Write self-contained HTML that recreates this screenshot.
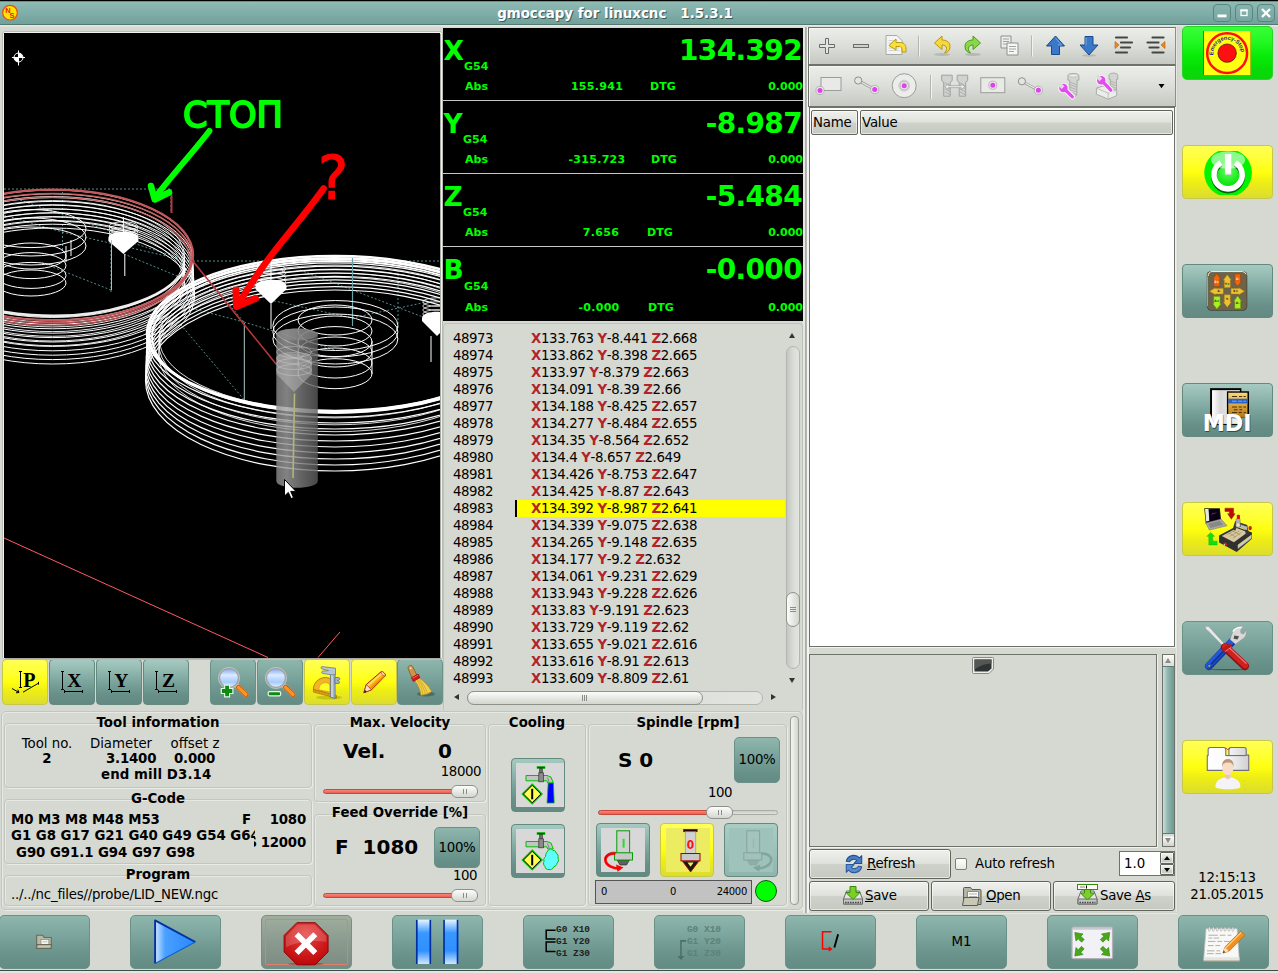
<!DOCTYPE html>
<html lang="en">
<head>
<meta charset="utf-8">
<title>gmoccapy for linuxcnc 1.5.3.1</title>
<style>
*{box-sizing:border-box;margin:0;padding:0}
html,body{width:1278px;height:973px;overflow:hidden}
body{position:relative;background:#d6d9d2;font-family:"DejaVu Sans","Liberation Sans",sans-serif;font-size:13px;color:#000;line-height:1}
.abs{position:absolute}
.b{font-weight:bold}
/* title bar */
#title{left:0;top:0;width:1278px;height:25px;background:linear-gradient(#55706a 0,#8fbcb2 1.2px,#88b5ae 5px,#80aeaa 12px,#76a49e 19px,#73a29c 22px);border-top:1px solid #000;border-bottom:1px solid #527a73}
#title .t{left:0;width:1230px;top:6px;text-align:center;color:#fff;font-weight:bold;font-size:13.4px;text-shadow:1px 1px 0 #3d5a55;white-space:pre}
.wb{width:18px;height:18px;border:1px solid #5b867f;border-radius:4px;background:linear-gradient(#86b3ad,#78a6a0)}
/* teal / yellow buttons */
.tb{border-radius:4px;background:linear-gradient(#a6cac2 0,#8db4ac 30%,#76a098 55%,#678f87 80%,#628a82 100%);border:1px solid #64897f}
.yb{border-radius:4px;background:linear-gradient(#ffff58 0,#ffff30 30%,#ffff10 50%,#eeee14 70%,#dcdc30 100%);border:1px solid #c8c848}
.gb{border-radius:5px;background:linear-gradient(#38ff38 0,#22f822 30%,#08ec08 55%,#06dc06 80%,#0cd40c 100%);border:1px solid #28d428}
/* frames */
.fr{border:1px solid #c3c6bf;border-radius:4px;box-shadow:inset 1px 1px 0 #e6e8e3, 1px 1px 0 #e9ebe6}
.lbl{font-weight:bold;font-size:13.4px;white-space:nowrap}
/* gtk buttons */
.gbtn{border:1px solid #62665a;border-radius:3px;background:linear-gradient(#f0f1ed 0,#dfe1db 48%,#cfd2ca 52%,#c6c9c1 100%);box-shadow:inset 0 0 0 1px rgba(255,255,255,.55)}

.drow{left:0;width:360px;border-bottom:1px solid #c8c8c8}
.drow:last-child{border-bottom:0}
.drow span{white-space:nowrap}
.ax{left:.5px;top:10px;font-size:26.5px}
.g54{left:21px;top:33px;font-size:11px}
.abl{left:22px;top:53px;font-size:11px}
.big{right:1px;top:9px;font-size:28px;letter-spacing:-0.65px}
.abv{left:104px;width:100px;text-align:center;top:53px;font-size:11px;letter-spacing:.3px}
.dtg{left:206px;top:53px;font-size:11px}
.dtv{right:0;top:53px;font-size:11px}
.drow:last-child .g54{top:34px}.drow:last-child .abl,.drow:last-child .abv,.drow:last-child .dtg,.drow:last-child .dtv{top:55px}

#gcl div{height:17px;line-height:17px;font-size:13.33px;white-space:pre;position:relative;letter-spacing:-0.36px}
#gcl i{font-style:normal;position:absolute;left:8px;letter-spacing:-0.48px}
#gcl u{text-decoration:none;position:absolute;left:70px;right:0;padding-left:16px}
#gcl b{color:#b0242a}
#gcl .hl u{background:#ffff00;border-left:2px solid #000;padding-left:14px}
.sbv{border:1px solid #b3b6af;border-radius:7px;background:linear-gradient(90deg,#c5c8c1,#dcdfd9 60%,#e2e4df)}
.sbth{border:1px solid #8f928b;border-radius:7px;background:linear-gradient(90deg,#fdfdfc,#e6e8e3 50%,#d3d6cf)}
.sbth.h{background:linear-gradient(#fdfdfc,#e6e8e3 50%,#d3d6cf)}

.gv{position:absolute;left:3px;right:3px;top:50%;margin-top:-3px;height:5px;border-top:1px solid #8a8d86;border-bottom:1px solid #8a8d86}
.gv:after{content:"";position:absolute;left:0;right:0;top:1px;height:1px;background:#8a8d86}
.gh{position:absolute;top:3px;bottom:3px;left:50%;margin-left:-3px;width:5px;border-left:1px solid #8a8d86;border-right:1px solid #8a8d86}
.gh:after{content:"";position:absolute;top:0;bottom:0;left:1px;width:1px;background:#8a8d86}

.c{text-align:center}.r{text-align:right}
.lbl{background:#d6d9d2;font-size:13.33px}
.lbl.c{background:none}
.sl{height:5px;border:1px solid #c9483c;border-radius:3px;background:linear-gradient(#f5897c,#ee5d4e)}
.slh{width:27px;height:13px;border:1px solid #8f928b;border-radius:6px;background:linear-gradient(#fdfdfc,#e8eae5 50%,#d3d6cf)}
.slh .gh{top:3px;bottom:3px;margin-left:-2px;width:4px}
.slh .gh:after{display:none}

.tbar{background:linear-gradient(#eceee9,#dcdfd9 50%,#c6c9c2);border:1px solid #6f726b;border-right-color:#8c8f88;box-shadow:inset 1px 1px 0 #f6f7f4,0 1px 0 #eef0ec}

.ul{text-decoration:underline}

.tb2{border-radius:5px;background:linear-gradient(#8eb6ad 0,#7da69e 35%,#6f9991 60%,#668f87 85%,#648c84 100%);border:1px solid #6a9188}

.drow:nth-child(2) .dtg{left:208px}.drow:nth-child(3) .dtg{left:204px}.drow:nth-child(4) .dtg{left:205px}.drow:nth-child(1) .dtg{left:207px}
.drow:nth-child(2) .g54,.drow:nth-child(3) .g54{left:20px}
</style>
</head>
<body>
<!-- TITLE -->
<div id="title" class="abs">
  <div class="abs t">gmoccapy for linuxcnc   1.5.3.1</div>
</div>
<div class="abs" style="left:0;top:25px;width:1278px;height:2px;background:linear-gradient(#e6e8e3,#dddfd9)"></div>
<!-- DRO -->
<div class="abs" id="dro" style="left:443px;top:28px;width:360px;height:293px;background:#000;color:#00ff00;font-weight:bold">
<div class="abs drow" style="top:0px;height:73px"><span class="abs ax">X</span><span class="abs g54">G54</span><span class="abs abl">Abs</span><span class="abs big">134.392</span><span class="abs abv">155.941</span><span class="abs dtg">DTG</span><span class="abs dtv">0.000</span></div>
<div class="abs drow" style="top:73px;height:73px"><span class="abs ax">Y</span><span class="abs g54">G54</span><span class="abs abl">Abs</span><span class="abs big">-8.987</span><span class="abs abv">-315.723</span><span class="abs dtg">DTG</span><span class="abs dtv">0.000</span></div>
<div class="abs drow" style="top:146px;height:73px"><span class="abs ax">Z</span><span class="abs g54">G54</span><span class="abs abl">Abs</span><span class="abs big">-5.484</span><span class="abs abv" style="margin-left:4px">7.656</span><span class="abs dtg">DTG</span><span class="abs dtv">0.000</span></div>
<div class="abs drow" style="top:219px;height:75px"><span class="abs ax">B</span><span class="abs g54">G54</span><span class="abs abl">Abs</span><span class="abs big">-0.000</span><span class="abs abv" style="margin-left:2px">-0.000</span><span class="abs dtg">DTG</span><span class="abs dtv">0.000</span></div>
</div>
<!-- GCODE LIST -->
<div class="abs" id="gl" style="left:443px;top:323px;width:360px;height:387px;border:1px solid #bfc2bb;border-radius:4px 4px 0 0;border-bottom:0"></div>
<div class="abs" id="gcl" style="left:445px;top:330px;width:340px;height:360px;overflow:hidden">
<div><i>48973</i><u><b>X</b>133.763 <b>Y</b>-8.441 <b>Z</b>2.668</u></div>
<div><i>48974</i><u><b>X</b>133.862 <b>Y</b>-8.398 <b>Z</b>2.665</u></div>
<div><i>48975</i><u><b>X</b>133.97 <b>Y</b>-8.379 <b>Z</b>2.663</u></div>
<div><i>48976</i><u><b>X</b>134.091 <b>Y</b>-8.39 <b>Z</b>2.66</u></div>
<div><i>48977</i><u><b>X</b>134.188 <b>Y</b>-8.425 <b>Z</b>2.657</u></div>
<div><i>48978</i><u><b>X</b>134.277 <b>Y</b>-8.484 <b>Z</b>2.655</u></div>
<div><i>48979</i><u><b>X</b>134.35 <b>Y</b>-8.564 <b>Z</b>2.652</u></div>
<div><i>48980</i><u><b>X</b>134.4 <b>Y</b>-8.657 <b>Z</b>2.649</u></div>
<div><i>48981</i><u><b>X</b>134.426 <b>Y</b>-8.753 <b>Z</b>2.647</u></div>
<div><i>48982</i><u><b>X</b>134.425 <b>Y</b>-8.87 <b>Z</b>2.643</u></div>
<div class="hl"><i>48983</i><u><b>X</b>134.392 <b>Y</b>-8.987 <b>Z</b>2.641</u></div>
<div><i>48984</i><u><b>X</b>134.339 <b>Y</b>-9.075 <b>Z</b>2.638</u></div>
<div><i>48985</i><u><b>X</b>134.265 <b>Y</b>-9.148 <b>Z</b>2.635</u></div>
<div><i>48986</i><u><b>X</b>134.177 <b>Y</b>-9.2 <b>Z</b>2.632</u></div>
<div><i>48987</i><u><b>X</b>134.061 <b>Y</b>-9.231 <b>Z</b>2.629</u></div>
<div><i>48988</i><u><b>X</b>133.943 <b>Y</b>-9.228 <b>Z</b>2.626</u></div>
<div><i>48989</i><u><b>X</b>133.83 <b>Y</b>-9.191 <b>Z</b>2.623</u></div>
<div><i>48990</i><u><b>X</b>133.729 <b>Y</b>-9.119 <b>Z</b>2.62</u></div>
<div><i>48991</i><u><b>X</b>133.655 <b>Y</b>-9.021 <b>Z</b>2.616</u></div>
<div><i>48992</i><u><b>X</b>133.616 <b>Y</b>-8.91 <b>Z</b>2.613</u></div>
<div><i>48993</i><u><b>X</b>133.609 <b>Y</b>-8.809 <b>Z</b>2.61</u></div>
</div>
<div class="abs sbv" style="left:786px;top:346px;width:14px;height:323px"></div>
<div class="abs sbth" style="left:786px;top:592px;width:14px;height:35px"><em class="gv"></em></div>
<div class="abs" style="left:789px;top:333px;border:3.5px solid transparent;border-bottom:5px solid #333;border-top:0"></div>
<div class="abs" style="left:789px;top:678px;border:3.5px solid transparent;border-top:5px solid #333;border-bottom:0"></div>
<div class="abs sbv" style="left:467px;top:691px;width:296px;height:14px"></div>
<div class="abs sbth h" style="left:467px;top:691px;width:236px;height:14px"><em class="gh"></em></div>
<div class="abs" style="left:454px;top:694px;border:3.5px solid transparent;border-right:5px solid #333;border-left:0"></div>
<div class="abs" style="left:771px;top:694px;border:3.5px solid transparent;border-left:5px solid #333;border-right:0"></div>
<!-- VIEW BUTTONS -->
<div class="abs yb" style="left:2px;top:659px;width:46px;height:46px"><svg width="44" height="44" viewBox="0 0 44 44"><text x="20.2" y="27.3" font-family="Liberation Serif,DejaVu Serif,serif" font-weight="bold" font-size="20">P</text><path d="M16 11.500h3M17.500 11.500v16M16 27.500h3M9 28.500l7 4M16 32.500l-1.200-2.800M16 32.500l-3 .3M20 32.200l15.500-9M35.500 21.800v2.800" stroke="#000" stroke-width="1" fill="none"/></svg></div>
<div class="abs tb" style="left:49px;top:659px;width:46px;height:46px"><svg width="44" height="44" viewBox="0 0 44 44"><text x="17.3" y="27" font-family="Liberation Serif,DejaVu Serif,serif" font-weight="bold" font-size="19.5">X</text><path d="M11 11.500h3M12.500 11.500v18M11 29.500h3M14.500 31.500h18M14.500 30v3M32.500 30v3" stroke="#000" stroke-width="1" fill="none"/></svg></div>
<div class="abs tb" style="left:96px;top:659px;width:46px;height:46px"><svg width="44" height="44" viewBox="0 0 44 44"><text x="17.3" y="27" font-family="Liberation Serif,DejaVu Serif,serif" font-weight="bold" font-size="19.5">Y</text><path d="M11 11.500h3M12.500 11.500v18M11 29.500h3M14.500 31.500h18M14.500 30v3M32.500 30v3" stroke="#000" stroke-width="1" fill="none"/></svg></div>
<div class="abs tb" style="left:143px;top:659px;width:46px;height:46px"><svg width="44" height="44" viewBox="0 0 44 44"><text x="18" y="27" font-family="Liberation Serif,DejaVu Serif,serif" font-weight="bold" font-size="19.5">Z</text><path d="M11 11.500h3M12.500 11.500v18M11 29.500h3M14.500 31.500h18M14.500 30v3M32.500 30v3" stroke="#000" stroke-width="1" fill="none"/></svg></div>
<div class="abs tb2" style="left:210px;top:659px;width:46px;height:46px;border-radius:4px"><svg width="44" height="44" viewBox="0 0 44 44"><defs><linearGradient id="lens" x1="0" y1="0" x2="0" y2="1"><stop offset="0" stop-color="#7aa4f0"/><stop offset=".35" stop-color="#dcebff"/><stop offset=".7" stop-color="#a4ccff"/><stop offset="1" stop-color="#e4f0ff"/></linearGradient></defs><path d="M25 25l10 9.500" stroke="#b4b4b4" stroke-width="5.200" stroke-linecap="round"/><path d="M27.500 27.300l7.500 7.200" stroke="#c85a00" stroke-width="5" stroke-linecap="round"/><path d="M27.500 27.300l7.500 7.200" stroke="#ff9420" stroke-width="3.200" stroke-linecap="round"/><circle cx="18" cy="18" r="9.700" fill="url(#lens)" stroke="#a2a2a2" stroke-width="1.800"/><circle cx="18" cy="18" r="10.600" fill="none" stroke="#d8d8d8" stroke-width=".6"/><path d="M16.100 24.600v12.800M9.700 31h12.800" stroke="#e8f4e8" stroke-width="6" stroke-linejoin="round"/><path d="M16.100 25.800v10.400M10.900 31h10.400" stroke="#0c8c0c" stroke-width="3.800"/></svg></div>
<div class="abs tb2" style="left:257px;top:659px;width:46px;height:46px;border-radius:4px"><svg width="44" height="44" viewBox="0 0 44 44"><path d="M25 25l10 9.500" stroke="#b4b4b4" stroke-width="5.200" stroke-linecap="round"/><path d="M27.500 27.300l7.500 7.200" stroke="#c85a00" stroke-width="5" stroke-linecap="round"/><path d="M27.500 27.300l7.500 7.200" stroke="#ff9420" stroke-width="3.200" stroke-linecap="round"/><circle cx="18" cy="18" r="9.700" fill="url(#lens)" stroke="#a2a2a2" stroke-width="1.800"/><circle cx="18" cy="18" r="10.600" fill="none" stroke="#d8d8d8" stroke-width=".6"/><rect x="9.600" y="31" width="13.600" height="5.400" rx="1.800" fill="#e8f4e8"/><rect x="10.800" y="32.200" width="11.200" height="3" rx=".8" fill="#0c8c0c"/></svg></div>
<div class="abs yb" style="left:304px;top:659px;width:46px;height:46px"><svg width="44" height="44" viewBox="0 0 44 44"><ellipse cx="24" cy="37.500" rx="13" ry="2" fill="#a0a000" opacity=".45"/><path d="M8.400 29.500C8.400 22.500 14 17.500 20.500 17.500c3.500 0 5.700 1.500 6.700 3.500v14z" fill="#f4b428" stroke="#b07808" stroke-width=".9"/><path d="M13.800 29.800c0-4.200 3-7.200 6.700-7.200 2 0 3.500 1 4.500 2.400v7z" fill="#ffff28" stroke="#c08810" stroke-width=".6"/><path d="M8.400 29.500l23.100 6v2.600l-23.100-6z" fill="#e8a418" stroke="#a87008" stroke-width=".7"/><path d="M11 30.800v1.500M14 31.600v1.500M17 32.400v1.500M20 33.200v1.500M23 34v1.500" stroke="#a87008" stroke-width=".6"/><path d="M25.400 11.500h4.700v27l-4.700-1.200z" fill="#a4b2c2" stroke="#5e6e80" stroke-width=".8"/><path d="M27 12v25" stroke="#e4eaf2" stroke-width="1"/><path d="M30.500 8.200L17 6.600c-1.200 0-1.200 2 0 2.400l6.500 1.600-6 .6c-1.200.2-1.200 2 0 2.200l8 1.300h5z" fill="#b8c4d0" stroke="#6a7a8c" stroke-width=".8" stroke-linejoin="round"/><path d="M30 17.500h3.500c1.500 0 1.800 2 .5 2.500l-1.500.5 1.500.8c1 .5.800 2.200-.5 2.200H30z" fill="#a4b2c2" stroke="#5e6e80" stroke-width=".8"/></svg></div>
<div class="abs yb" style="left:351px;top:659px;width:46px;height:46px"><svg width="44" height="44" viewBox="0 0 44 44"><path d="M11.900 32.700l2.400-8.200L29 11.800c1.400-1.200 5.600 2.800 4.200 4.200L19.500 29.800z" fill="#ffb010" stroke="#b01818" stroke-width="1" stroke-linejoin="round"/><path d="M15.500 25.800L30.200 13" stroke="#ffe060" stroke-width="1.800"/><path d="M18.300 28.600L32.500 16" stroke="#e88800" stroke-width="1.400"/><path d="M11.900 32.700l2.400-8.200 5.200 5.300z" fill="#f8e4c4" stroke="#b01818" stroke-width=".7" stroke-linejoin="round"/><path d="M11.900 32.700l.9-3 2 2.100z" fill="#202020"/><ellipse cx="31.200" cy="13.800" rx="1.300" ry="2.800" transform="rotate(-45 31.200 13.800)" fill="#f0d8b0" stroke="#b01818" stroke-width=".5"/></svg></div>
<div class="abs tb2" style="left:397px;top:659px;width:46px;height:46px;border-radius:4px"><svg width="44" height="44" viewBox="0 0 44 44"><ellipse cx="28" cy="34" rx="9" ry="2.600" fill="#2c4a44" opacity=".5"/><path d="M10.200 8.500c-.8-2.800 3-4.300 4.500-2l4.500 9.500-5 2.500z" fill="#cf9448" stroke="#8a5a20" stroke-width=".8"/><circle cx="12.600" cy="8.200" r="1" fill="#f4e4c8"/><path d="M16.500 20.500l4.500-2.500c5 3 9.500 7.500 12.600 13.500-2 1.500-5 3-10.600 3.800-.8-5.800-3-10.800-6.500-14.800z" fill="#f2d24c" stroke="#b8901c" stroke-width=".8"/><path d="M19 20.500c3 3.500 5 8.500 6 14M21 19.500c4 3.500 6.500 8 8.500 13.500M20 20c3.500 3.500 5.800 8 7.400 14" stroke="#c49c24" stroke-width=".7" fill="none"/><path d="M13.500 17.800l6.500-3.800 1.800 3.700-6.500 3.800z" fill="#d81818" stroke="#8a0808" stroke-width=".7"/><path d="M14.500 18.300l5.500-3.200" stroke="#ff7060" stroke-width=".8"/></svg></div>
<!-- INFO PANELS -->
<div class="abs fr" style="left:1px;top:711px;width:802px;height:199px;border-radius:5px"></div>
<div class="abs fr" style="left:4px;top:723px;width:308px;height:65px"></div>
<div class="abs lbl c" style="left:58px;width:200px;top:716px">Tool information</div>
<div class="abs c" style="left:0;width:94px;top:737px;font-size:13.33px">Tool no.</div>
<div class="abs c b" style="left:0;width:94px;top:752px;font-size:13.33px">2</div>
<div class="abs c" style="left:71px;width:100px;top:737px;font-size:13.33px">Diameter</div>
<div class="abs b" style="left:106px;top:752px;font-size:13.33px;letter-spacing:-.2px">3.1400</div>
<div class="abs c" style="left:145px;width:100px;top:737px;font-size:13.33px">offset z</div>
<div class="abs b" style="left:174px;top:752px;font-size:13.33px;letter-spacing:-.2px">0.000</div>
<div class="abs b" style="left:101px;top:768px;font-size:13.33px;letter-spacing:.1px">end mill D3.14</div>

<div class="abs fr" style="left:4px;top:799px;width:308px;height:65px"></div>
<div class="abs lbl c" style="left:58px;width:200px;top:792px">G-Code</div>
<div class="abs b" style="left:11px;top:813px;font-size:13.33px;letter-spacing:-.06px">M0 M3 M8 M48 M53</div>
<div class="abs b" style="left:11px;top:829px;width:244px;overflow:hidden;white-space:nowrap;font-size:13.33px;letter-spacing:-.04px">G1 G8 G17 G21 G40 G49 G54 G64</div>
<div class="abs b" style="left:16px;top:846px;font-size:13.33px;letter-spacing:-.06px">G90 G91.1 G94 G97 G98</div>
<div class="abs b" style="left:242px;top:813px;font-size:13.33px">F</div>
<div class="abs b r" style="left:256px;width:50px;top:813px;font-size:13.33px;letter-spacing:-.2px">1080</div>
<div class="abs b" style="left:254px;width:3px;overflow:hidden;top:836px;font-size:13.33px;direction:rtl">S</div>
<div class="abs b r" style="left:256px;width:50px;top:836px;font-size:13.33px;letter-spacing:-.2px">12000</div>

<div class="abs fr" style="left:4px;top:875px;width:308px;height:31px"></div>
<div class="abs lbl c" style="left:58px;width:200px;top:868px">Program</div>
<div class="abs" style="left:11px;top:888px;font-size:13.33px;letter-spacing:-.22px">../../nc_files//probe/LID_NEW.ngc</div>

<div class="abs fr" style="left:314px;top:724px;width:172px;height:78px"></div>
<div class="abs lbl c" style="left:300px;width:200px;top:716px">Max. Velocity</div>
<div class="abs b" style="left:343px;top:741px;font-size:20px">Vel.</div>
<div class="abs b" style="left:438px;top:741px;font-size:20px">0</div>
<div class="abs r" style="left:400px;width:81px;top:765px;font-size:13.33px;letter-spacing:-.45px">18000</div>
<div class="abs sl" style="left:323px;top:789px;width:155px"></div><div class="abs slh" style="left:451px;top:785px"><em class="gh"></em></div>

<div class="abs fr" style="left:314px;top:814px;width:172px;height:92px"></div>
<div class="abs lbl c" style="left:300px;width:200px;top:806px">Feed Override [%]</div>
<div class="abs b" style="left:335px;top:837px;font-size:20px;white-space:pre">F  1080</div>
<div class="abs tb2 c" style="left:434px;top:827px;width:46px;height:41px;line-height:39px;font-size:13.33px;letter-spacing:-.3px">100%</div>
<div class="abs r" style="left:400px;width:77px;top:869px;font-size:13.33px;letter-spacing:-.45px">100</div>
<div class="abs sl" style="left:323px;top:893px;width:155px"></div><div class="abs slh" style="left:451px;top:889px"><em class="gh"></em></div>

<div class="abs fr" style="left:488px;top:724px;width:98px;height:182px"></div>
<div class="abs lbl c" style="left:437px;width:200px;top:716px">Cooling</div>

<div class="abs fr" style="left:588px;top:724px;width:199px;height:182px"></div>
<div class="abs lbl c" style="left:588px;width:200px;top:716px">Spindle [rpm]</div>
<div class="abs b" style="left:618px;top:750px;font-size:20px">S 0</div>
<div class="abs tb2 c" style="left:734px;top:737px;width:46px;height:46px;line-height:44px;font-size:13.33px;letter-spacing:-.3px">100%</div>
<div class="abs c" style="left:680px;width:80px;top:786px;font-size:13.33px;letter-spacing:-.45px">100</div>
<div class="abs sl" style="left:598px;top:810px;width:180px;background:linear-gradient(#c9ccc5,#dfe1dc);border-color:#a9aca5"></div>
<div class="abs sl" style="left:598px;top:810px;width:112px"></div><div class="abs slh" style="left:706px;top:806px"><em class="gh"></em></div>
<div class="abs" style="left:595px;top:880px;width:157px;height:24px;background:#c2c2c2;border:1px solid #555;font-size:10px;letter-spacing:-.3px"><span class="abs" style="left:5px;top:6px">0</span><span class="abs c" style="left:57px;width:40px;top:6px">0</span><span class="abs r" style="right:4px;top:6px">24000</span></div>
<div class="abs" style="left:755px;top:880px;width:22px;height:22px;border-radius:50%;background:#00ff00;border:1px solid #0a5a0a"></div>
<div class="abs" style="left:790px;top:716px;width:9px;height:189px;border:1px solid #9a9d96;border-radius:4px;background:linear-gradient(90deg,#f4f5f2,#d2d5ce)"></div>
<!-- COOLING/SPINDLE BUTTONS -->
<div class="abs tb" style="left:511px;top:758px;width:54px;height:54px"><svg class="abs" style="left:4px;top:4px;background:#d8d8d8" width="48" height="44" viewBox="0 0 48 44"><path d="M21 3.500h8v2h-8z" fill="#0a5a0a" stroke="#00c000" stroke-width=".6"/><path d="M23.600 5.500h2.800v5h-2.800z" fill="#707070" stroke="#222" stroke-width=".6"/><path d="M10 12.500h21l4 1.500 2.300 6h-5.500l-1-2.200H10z" fill="#c4c4c4" stroke="#00c000" stroke-width="1"/><path d="M31.500 14.500l1.800 5" stroke="#888" stroke-width="1"/><rect x="22.800" y="9.800" width="4.600" height="9" fill="#8a8a8a" stroke="#333" stroke-width=".7"/><path d="M16.200 21.300l9.700 9.700-9.700 9.700L6.500 31z" fill="#ffff50" stroke="#00c000" stroke-width="1.600"/><path d="M16.200 22.300l8.700 8.700-8.700 8.700L7.500 31z" fill="#ffff50" stroke="#000" stroke-width="1"/><rect x="15.200" y="25.800" width="2" height="10.500" fill="#000"/><path d="M32.200 20h5.200l.8 20h-7.200z" fill="#0000ff" stroke="#00c000" stroke-width=".8"/></svg></div>
<div class="abs tb" style="left:511px;top:824px;width:54px;height:54px"><svg class="abs" style="left:4px;top:4px;background:#d8d8d8" width="48" height="44" viewBox="0 0 48 44"><path d="M21 3.500h8v2h-8z" fill="#0a5a0a" stroke="#00c000" stroke-width=".6"/><path d="M23.600 5.500h2.800v5h-2.800z" fill="#707070" stroke="#222" stroke-width=".6"/><path d="M10 12.500h21l4 1.500 2.300 6h-5.500l-1-2.200H10z" fill="#c4c4c4" stroke="#00c000" stroke-width="1"/><path d="M31.500 14.500l1.800 5" stroke="#888" stroke-width="1"/><rect x="22.800" y="9.800" width="4.600" height="9" fill="#8a8a8a" stroke="#333" stroke-width=".7"/><path d="M16.200 21.300l9.700 9.700-9.700 9.700L6.500 31z" fill="#ffff50" stroke="#00c000" stroke-width="1.600"/><path d="M16.200 22.300l8.700 8.700-8.700 8.700L7.500 31z" fill="#ffff50" stroke="#000" stroke-width="1"/><rect x="15.200" y="25.800" width="2" height="10.500" fill="#000"/><path d="M33 20.500c2-1 3 0 4 1 2-.5 3 1 3 2.500 2 1 2.500 3 2 5 1 2 .5 4-1 5 0 2-1.500 3.500-3 3.500-1 2.500-3 3.500-5 3-2 .5-4-1-4-3-1.500-1.500-2-3.500-1-5-.5-2 0-4 1.500-5 0-2.500 1.500-5 3.500-7z" fill="#60ffff" stroke="#00c000" stroke-width="1"/></svg></div>
<div class="abs tb" style="left:596px;top:823px;width:54px;height:54px"><svg class="abs" style="left:4px;top:4px;background:#d8d8d8" width="44" height="44" viewBox="0 0 44 44"><path d="M16 32h12.500l-3 5h-6.500z" fill="#606060" stroke="#222" stroke-width=".6"/><rect x="15.800" y="2.800" width="12.800" height="22.500" fill="#d0d0d0" stroke="#00a000" stroke-width="1"/><rect x="21.600" y="10.800" width="2" height="8.800" fill="#20e020"/><rect x="13.500" y="24.800" width="18" height="7.200" fill="#c8c8c8" stroke="#00a000" stroke-width="1"/><path d="M14.500 25.500C8 25 3.500 28.500 4.500 33c1 4.500 7 7.500 14 7.500" fill="none" stroke="#ff0000" stroke-width="2.600"/><path d="M15 36.500l7.500 3-6 4.300z" fill="#ff0000"/><path d="M14.500 25.500C8 25 3.500 28.500 4.500 33" fill="none" stroke="#a00000" stroke-width=".6" transform="translate(0,-1.300)"/></svg></div>
<div class="abs yb" style="left:660px;top:823px;width:54px;height:54px"><svg class="abs" style="left:5px;top:4px;background:#ecec62" width="44" height="44" viewBox="0 0 44 44"><rect x="17.600" y="1.300" width="13.600" height="2.500" fill="#300000" stroke="#900" stroke-width=".5"/><rect x="19.200" y="3.800" width="10.600" height="21.800" fill="#d2d2d2" stroke="#888" stroke-width=".6"/><text x="24.500" y="21.500" text-anchor="middle" font-family="DejaVu Sans,Liberation Sans,sans-serif" font-size="12.500" font-weight="bold" fill="#ff1010" transform="translate(24.500 0) scale(.85 1) translate(-24.500 0)">0</text><rect x="15" y="25.500" width="19" height="7.400" fill="#c8c8c8" stroke="#a00000" stroke-width="1"/><path d="M16.500 33.300h16.200L24.600 44z" fill="#181818" stroke="#c00000" stroke-width=".9"/><path d="M21.500 34.500h6.200l-3.100 4.200z" fill="#ecec62"/></svg></div>
<div class="abs tb" style="left:724px;top:823px;width:54px;height:54px;background:linear-gradient(#a9cdc5,#8fb6ae)"><svg class="abs" style="left:4px;top:4px;background:#9fc3bb" width="44" height="44" viewBox="0 0 44 44"><g opacity=".55"><path d="M18 32h12.500l-3 5h-6.500z" fill="#80a098" stroke="#6f958d" stroke-width=".6"/><rect x="17.800" y="2.800" width="12.800" height="22.500" fill="#a8c4be" stroke="#6a9088" stroke-width="1"/><rect x="23.600" y="10.800" width="1.600" height="8.800" fill="#8ab8a8"/><rect x="14.800" y="24.800" width="18" height="7.200" fill="#a4c0ba" stroke="#6a9088" stroke-width="1"/><path d="M32 25.500c6.500-.5 11 3 10 7.500-1 4.500-7 7.500-14 7.500" fill="none" stroke="#6a9088" stroke-width="2.600"/><path d="M31.500 36.500l-7.500 3 6 4.300z" fill="#6a9088"/></g></svg></div>
<!-- RIGHT PANEL -->
<div class="abs" style="left:803px;top:27px;width:6px;height:886px;background:linear-gradient(90deg,#e6e8e3 0,#e6e8e3 30%,#a9aca5 42%,#b3b6af 58%,#f4f5f2 70%,#f4f5f2 100%)"></div>
<div class="abs tbar" style="left:808px;top:27px;width:368px;height:38px"><svg class="abs" style="left:0;top:0" width="366" height="36" viewBox="0 0 366 36"><g transform="translate(18.0 18.0)"><path d="M-1.500-7.500h3v6h6v3h-6v6h-3v-6h-6v-3h6z" fill="#e4e5e2" stroke="#6a6c68" stroke-width="1"/></g><g transform="translate(52.0 18.0)"><rect x="-7.500" y="-1.500" width="15" height="3" fill="#d0d1ce" stroke="#6a6c68" stroke-width="1"/></g><g transform="translate(86.5 17.5)"><path d="M-9.500-10h11l5 5v14h-16z" fill="#f4f4f2" stroke="#a8aaa6" stroke-width="1"/><path d="M-7-5h9M-7-2.500h11M-7 0h11M-7 2.500h11M-7 5h11" stroke="#c8cac6" stroke-width=".8"/><path d="M-6.500 0l7-6.500v3.500h4.500c4 0 5.500 3 5.500 6.500v3h-4v-2c0-2-.5-3.500-2.500-3.500h-3.500v3.500z" fill="#f8e03c" stroke="#b89a10" stroke-width="1" stroke-linejoin="round"/></g><g transform="translate(133.0 17.0)"><ellipse cx="0" cy="9.500" rx="8" ry="1.500" fill="#9a9c96" opacity=".5"/><path d="M-7.500-2l7.500-7v4c5 0 8 2.500 8 6.500s-2.500 6-5.500 6.500c1.500-1.500 2-2.500 2-4.500 0-2.500-2-3.500-4.500-3.500v4.500z" fill="#f6d83a" stroke="#b8960c" stroke-width="1" stroke-linejoin="round"/></g><g transform="translate(164.0 17.0)"><ellipse cx="0" cy="9.500" rx="8" ry="1.500" fill="#9a9c96" opacity=".5"/><path d="M7.500-2l-7.500-7v4c-5 0-8 2.500-8 6.500s2.500 6 5.500 6.500c-1.500-1.500-2-2.500-2-4.500 0-2.500 2-3.500 4.500-3.500v4.500z" fill="#8ad84a" stroke="#4a9a18" stroke-width="1" stroke-linejoin="round"/></g><g transform="translate(200.5 17.5)"><path d="M-8.500-9.500h10v12h-10z" fill="#ededeb" stroke="#8e908c" stroke-width="1"/><path d="M-6.500-6.500h6M-6.500-4h6M-6.500-1.500h6" stroke="#9a9c98" stroke-width=".9"/><path d="M-2.500-2.500h11v12h-11z" fill="#f6f6f4" stroke="#8e908c" stroke-width="1"/><path d="M-.5 1h7M-.5 3.500h7M-.5 6h5" stroke="#9a9c98" stroke-width=".9"/></g><g transform="translate(246.5 17.5)"><path d="M0-9.500l9 10h-5v8.500h-8v-8.500h-5z" fill="#3a78c8" stroke="#1c4a8c" stroke-width="1" stroke-linejoin="round"/><path d="M0-7.500l6 7h-3.500" fill="none" stroke="#7aa8e0" stroke-width="1"/></g><g transform="translate(280.0 17.5)"><ellipse cx="0" cy="10" rx="7" ry="1.200" fill="#9a9c96" opacity=".5"/><path d="M0 9.500l9-10h-5v-8.500h-8v8.500h-5z" fill="#3a78c8" stroke="#1c4a8c" stroke-width="1" stroke-linejoin="round"/><path d="M-3-8v8" stroke="#7aa8e0" stroke-width="1"/></g><g transform="translate(314.0 17.0)"><g stroke="#444642" stroke-width="2.200" stroke-linecap="round"><path d="M-7-7.500h11M-2-2.500h11M-2 2.500h9M-7 7.500h11"/></g><path d="M-8-3.500l4 3.500-4 3.500z" fill="#f08818" stroke="#b85c08" stroke-width=".6"/></g><g transform="translate(347.5 17.0)"><g stroke="#444642" stroke-width="2.200" stroke-linecap="round"><path d="M-4-7.500h11M-9-2.500h11M-7 2.500h9M-4 7.500h11"/></g><path d="M8.500-3.500l-4 3.500 4 3.500z" fill="#f08818" stroke="#b85c08" stroke-width=".6"/></g><path d="M109.500 7.500v21" stroke="#b4b7b0"/><path d="M110.500 7.500v21" stroke="#f2f3f0"/><path d="M222.500 7.500v21" stroke="#b4b7b0"/><path d="M223.500 7.500v21" stroke="#f2f3f0"/></svg></div>
<div class="abs tbar" style="left:808px;top:65px;width:368px;height:42px"><svg class="abs" style="left:0;top:0" width="366" height="40" viewBox="0 0 366 40"><g transform="translate(20.0 19.0)"><rect x="-8" y="-7.500" width="20" height="13" fill="#e9eae7" stroke="#9a9c98" stroke-width="1"/><circle cx="-9" cy="5.5" r="3.300" fill="#e040f0" stroke="#e8e8e8" stroke-width="1.600"/><circle cx="-9" cy="5.5" r="4.100" fill="none" stroke="#9a9c98" stroke-width=".6"/></g><g transform="translate(57.7 19.0)"><path d="M-8.500-4.500l16.500 9" stroke="#9a9c98" stroke-width="2.600"/><path d="M-8.500-4.500l16.500 9" stroke="#eeeeec" stroke-width="1.200"/><circle cx="-8.500" cy="-4.500" r="3.600" fill="#e4e5e2" stroke="#8e908c" stroke-width="1"/><circle cx="8" cy="4.5" r="3.300" fill="#e040f0" stroke="#e8e8e8" stroke-width="1.600"/><circle cx="8" cy="4.5" r="4.100" fill="none" stroke="#9a9c98" stroke-width=".6"/></g><g transform="translate(95.2 19.7)"><circle cx="0" cy="0" r="12" fill="#ecedea" stroke="#9a9c98" stroke-width="1"/><circle cx="0" cy="0" r="5.500" fill="#e2e3e0" stroke="#c4c6c2" stroke-width=".8"/><circle cx="0" cy="0" r="3.300" fill="#e040f0" stroke="#e8e8e8" stroke-width="1.600"/><circle cx="0" cy="0" r="4.100" fill="none" stroke="#9a9c98" stroke-width=".6"/></g><g transform="translate(145.7 19.7)"><path d="M-13-10.500h10.500v5.500l-2 1.500v14h-6.500v-14l-2-1.500zM2.500-10.500h10.500v5.500l-2 1.500v14h-6.500v-14l-2-1.500z" fill="#d2d3d0" stroke="#a0a29e" stroke-width="1"/><path d="M-10-3l5.500 3M-10 0l5.500 3M-10 3l5.500 3M-10 6l5.500 3M5-3l5.500 3M5 0l5.500 3M5 3l5.500 3M5 6l5.500 3" stroke="#a4a6a2" stroke-width=".8"/><path d="M-10 1l3.500-3v2h13v-2l3.500 3-3.500 3v-2h-13v2z" fill="#ededeb" stroke="#a0a29e" stroke-width=".8"/></g><g transform="translate(183.8 19.2)"><rect x="-12" y="-7.500" width="24" height="15" fill="#e9eae7" stroke="#9a9c98" stroke-width="1"/><circle cx="0" cy="0" r="3.300" fill="#e040f0" stroke="#e8e8e8" stroke-width="1.600"/><circle cx="0" cy="0" r="4.100" fill="none" stroke="#9a9c98" stroke-width=".6"/></g><g transform="translate(221.4 19.8)"><path d="M-8.500-4.500l16.500 9" stroke="#9a9c98" stroke-width="2.600"/><path d="M-8.500-4.500l16.500 9" stroke="#eeeeec" stroke-width="1.200"/><circle cx="-8.500" cy="-4.500" r="3.600" fill="#e4e5e2" stroke="#8e908c" stroke-width="1"/><circle cx="8" cy="4.5" r="3.300" fill="#e040f0" stroke="#e8e8e8" stroke-width="1.600"/><circle cx="8" cy="4.5" r="4.100" fill="none" stroke="#9a9c98" stroke-width=".6"/></g><g transform="translate(259.2 19.2)"><path d="M-.3-9.500c0-3 11-3 11 0v4.500h-1.700l-.5 15-3.300 2.500-3.300-2.500-.5-15h-1.700z" fill="#d4d5d2" stroke="#a4a6a2" stroke-width=".9"/><ellipse cx="5.200" cy="-9.700" rx="4.600" ry="1.500" fill="#eeeeec" stroke="#b0b2ae" stroke-width=".6"/><path d="M2-3l6.500 2.500M2-.5l6.500 2.500M2 2l6.500 2.500M2 4.500l6.500 2.500M2 7l6.500 2.500" stroke="#a8aaa6" stroke-width=".8"/><path d="M-4.8 2.8L4.2 11.6" stroke="#f4f0f4" stroke-width="5.400" stroke-linecap="round"/><circle cx="-4.8" cy="2.8" r="5.300" fill="#f4f0f4"/><path d="M-4.8 2.8L4.2 11.6" stroke="#e24cf0" stroke-width="3.200" stroke-linecap="round"/><circle cx="-4.8" cy="2.8" r="4.200" fill="#e24cf0"/><g transform="translate(-4.8 2.8) rotate(-135.6)"><rect x="0.500" y="-1.900" width="6" height="3.800" fill="#dcdfd9"/></g></g><g transform="translate(298.2 19.2)"><path d="M1.800-10c0-2.800 8.800-2.800 8.800 0v4h-1.300v10.500h-6.200v-10.500h-1.300z" fill="#d4d5d2" stroke="#a4a6a2" stroke-width=".9"/><path d="M3.500-4l5 2M3.500-1.500l5 2M3.500 1l5 2" stroke="#a8aaa6" stroke-width=".8"/><path d="M-10.800 3l6-2 14.300 4v5.500l-8.500 3.500-11.800-5z" fill="#ececea" stroke="#a4a6a2" stroke-width=".9"/><path d="M-10.800 3l11.800 5 8.500-3M1 8v6" fill="none" stroke="#b4b6b2" stroke-width=".8"/><path d="M-6 -5L3.6 5" stroke="#f4f0f4" stroke-width="5.400" stroke-linecap="round"/><circle cx="-6" cy="-5" r="5.300" fill="#f4f0f4"/><path d="M-6 -5L3.6 5" stroke="#e24cf0" stroke-width="3.200" stroke-linecap="round"/><circle cx="-6" cy="-5" r="4.200" fill="#e24cf0"/><g transform="translate(-6 -5) rotate(-133.8)"><rect x="0.500" y="-1.900" width="6" height="3.800" fill="#dcdfd9"/></g></g><path d="M121.500 9v24" stroke="#b4b7b0"/><path d="M122.500 9v24" stroke="#f2f3f0"/><path d="M349.500 18h6l-3 4.200z" fill="#000"/></svg></div>
<div class="abs" style="left:809px;top:107px;width:366px;height:540px;background:#fff;border:1px solid #6f726b;box-shadow:1px 1px 0 #f2f3f0"></div>
<div class="abs gbtn" style="left:811px;top:110px;width:47px;height:25px;font-size:13.33px;line-height:23px;padding-left:1px;letter-spacing:-.2px;border-radius:2px">Name</div>
<div class="abs gbtn" style="left:860px;top:110px;width:313px;height:25px;font-size:13.33px;line-height:23px;padding-left:1px;letter-spacing:-.2px;border-radius:2px">Value</div>
<div class="abs" style="left:1176px;top:27px;width:2px;height:886px;background:linear-gradient(90deg,#f1f2ef,#c4c7c0)"></div>
<div class="abs" style="left:809px;top:912px;width:369px;height:2px;background:linear-gradient(#c4c7c0,#f1f2ef)"></div>
<!-- LOWER RIGHT PANEL -->
<div class="abs" style="left:809px;top:654px;width:348px;height:193px;border:1px solid #6f726b;background:#d6d9d2;box-shadow:1px 1px 0 #f2f3f0"></div>
<svg class="abs" style="left:972px;top:657px" width="22" height="17" viewBox="0 0 22 17"><path d="M.500 1.500a1 1 0 0 1 1-1h19a1 1 0 0 1 1 1v10.500l-4.500 4.500h-15.500a1 1 0 0 1-1-1z" fill="#eeeeec" stroke="#888a85"/><path d="M2.500 2.500h17v9l-3.500 3h-13.500z" fill="#2e3436"/><path d="M2.500 2.500h17v4c-6 0-12 2-17 6z" fill="#555753"/></svg>
<div class="abs" style="left:1162px;top:654px;width:13px;height:193px;border:1px solid #6f726b;background:linear-gradient(#fbfbfa,#d9dbd6 12px,#d9dbd6 181px,#fbfbfa 182px,#d0d3cc)"></div>
<div class="abs" style="left:1163px;top:666px;width:11px;height:168px;background:linear-gradient(90deg,#c4e0da,#8db5ad 45%,#6f9990);border-top:1px solid #5a7e77;border-bottom:1px solid #5a7e77"></div>
<div class="abs" style="left:1165px;top:658px;border:3.500px solid transparent;border-bottom:5px solid #8a8d86;border-top:0"></div>
<div class="abs" style="left:1165px;top:838px;border:3.500px solid transparent;border-top:5px solid #8a8d86;border-bottom:0"></div>
<div class="abs gbtn" style="left:809px;top:849px;width:142px;height:30px"></div>
<svg class="abs" style="left:843px;top:853px" width="22" height="22" viewBox="0 0 20 20"><path d="M3 7.500a7 7 0 0 1 12-3l2-2v7h-7l2.500-2.500a4 4 0 0 0-6.500 1z" fill="#4a7cc4" stroke="#244f8c" stroke-width="1" stroke-linejoin="round"/><path d="M17 12.500a7 7 0 0 1-12 3l-2 2v-7h7l-2.500 2.500a4 4 0 0 0 6.500-1z" fill="#5a8cd0" stroke="#2a5a9c" stroke-width="1" stroke-linejoin="round"/></svg>
<div class="abs" style="left:867px;top:857px;font-size:13.33px;letter-spacing:-.3px"><span class="ul">R</span>efresh</div>
<div class="abs" style="left:955px;top:858px;width:12px;height:12px;border:1px solid #7c7f78;border-radius:2px;background:linear-gradient(#fff,#e8eae5)"></div>
<div class="abs" style="left:975px;top:857px;font-size:13.33px;letter-spacing:-.2px">Auto refresh</div>
<div class="abs" style="left:1119px;top:851px;width:56px;height:25px;border:1px solid #6f726b;background:#fff;font-size:13.33px;line-height:23px;padding-left:4px">1.0</div>
<div class="abs gbtn" style="left:1160px;top:852px;width:14px;height:12px;border-radius:1px"></div>
<div class="abs gbtn" style="left:1160px;top:864px;width:14px;height:11px;border-radius:1px"></div>
<div class="abs" style="left:1164px;top:856px;border:3px solid transparent;border-bottom:4px solid #000;border-top:0"></div>
<div class="abs" style="left:1164px;top:868px;border:3px solid transparent;border-top:4px solid #000;border-bottom:0"></div>
<div class="abs gbtn" style="left:809px;top:881px;width:120px;height:30px"></div>
<div class="abs gbtn" style="left:931px;top:881px;width:120px;height:30px"></div>
<div class="abs gbtn" style="left:1053px;top:881px;width:122px;height:30px"></div>
<svg class="abs" style="left:842px;top:885px" width="22" height="22" viewBox="0 0 22 22"><path d="M1.500 14l3-8h13l3 8v5h-19z" fill="#e4e5e2" stroke="#6a6c68"/><path d="M1.500 14h19v5h-19z" fill="#c4c6c2" stroke="#6a6c68"/><path d="M3 17.500h16" stroke="#444" stroke-width="1.500" stroke-dasharray="1.500 1"/><path d="M8 1.500h6v6h4l-7 7-7-7h4z" fill="#7ad028" stroke="#3a8a08" stroke-linejoin="round"/></svg>
<div class="abs" style="left:865px;top:889px;font-size:13.33px;letter-spacing:-.3px"><span class="ul">S</span>ave</div>
<svg class="abs" style="left:962px;top:885px" width="22" height="22" viewBox="0 0 22 22"><path d="M1.500 19.500v-16a1 1 0 0 1 1-1h6l1.500 2h8a1 1 0 0 1 1 1v14z" fill="#b4b4a4" stroke="#5a5c50"/><path d="M5.500 6.500h11v9h-11z" fill="#fafaf8" stroke="#8a8c88"/><path d="M7 9h8M7 11.500h8" stroke="#a8aaa6" stroke-width=".9"/><path d="M.500 20.500l1.500-8h15l-1.500 8z" fill="#c8c8b4" stroke="#5a5c50" stroke-linejoin="round"/></svg>
<div class="abs" style="left:986px;top:889px;font-size:13.33px;letter-spacing:-.3px"><span class="ul">O</span>pen</div>
<svg class="abs" style="left:1076px;top:884px" width="23" height="23" viewBox="0 0 23 23"><path d="M2 15l3-8h13l3 8v5h-19z" fill="#e4e5e2" stroke="#6a6c68"/><path d="M2 15h19v5h-19z" fill="#c4c6c2" stroke="#6a6c68"/><path d="M3.500 18.500h16" stroke="#444" stroke-width="1.500" stroke-dasharray="1.500 1"/><path d="M8.500 5.500h6v3.500h4l-7 7-7-7h4z" fill="#7ad028" stroke="#3a8a08" stroke-linejoin="round"/><rect x="1.500" y=".500" width="20" height="5" fill="#fafaf8" stroke="#3a8a08"/><path d="M4 3h5" stroke="#888" stroke-width="1"/><path d="M10.500 1.500v3" stroke="#000" stroke-width="1"/></svg>
<div class="abs" style="left:1100px;top:889px;font-size:13.33px;letter-spacing:-.3px">Save <span class="ul">A</span>s</div>
<!-- RIGHT BUTTON COLUMN -->
<div class="abs gb" style="left:1182px;top:26px;width:91px;height:54px"></div><svg class="abs" style="left:1178px;top:22px" width="100" height="60" viewBox="0 0 1278 767"><rect x="322" y="115" width="608" height="563" fill="#ffff10"/><path d="M326 115v563" stroke="#403000" stroke-width="9"/><path d="M926 115v563" stroke="#907000" stroke-width="6"/>
<circle cx="628" cy="398" r="255" fill="none" stroke="#ff1010" stroke-width="32"/><circle cx="628" cy="398" r="118" fill="#ff1010" stroke="#300" stroke-width="8"/>
<path id="esp" d="M452 425A178 178 0 1 1 804 438" fill="none"/><text font-family="Liberation Sans,DejaVu Sans,sans-serif" font-weight="bold" font-size="72" fill="#1a1a96" letter-spacing="-1"><textPath href="#esp">Emergency-Stop</textPath></text></svg>
<div class="abs yb" style="left:1182px;top:145px;width:91px;height:54px"></div><svg class="abs" style="left:1178px;top:140px" width="100" height="60" viewBox="0 0 1278 767"><defs><clipPath id="pc"><rect x="300" y="140" width="680" height="562"/></clipPath><radialGradient id="pg" cx=".5" cy=".35" r=".7"><stop offset="0" stop-color="#60ff60"/><stop offset="1" stop-color="#00e000"/></radialGradient></defs><g clip-path="url(#pc)"><circle cx="640" cy="420" r="305" fill="#00f400"/><circle cx="640" cy="440" r="150" fill="url(#pg)"/>
<path d="M548 290A180 180 0 1 0 732 290" fill="none" stroke="#006400" stroke-width="72" transform="translate(0 22)"/>
<path d="M548 290A180 180 0 1 0 732 290" fill="none" stroke="#fff" stroke-width="72"/>
<rect x="600" y="180" width="80" height="262" fill="#fff"/><rect x="600" y="430" width="80" height="14" fill="#c8d8c8"/>
<ellipse cx="640" cy="255" rx="218" ry="112" fill="#fff" opacity=".55"/><rect x="600" y="180" width="80" height="190" fill="#fff" opacity=".7"/></g></svg>
<div class="abs tb" style="left:1182px;top:264px;width:91px;height:54px"></div><svg class="abs" style="left:1178px;top:260px" width="100" height="60" viewBox="0 0 1278 767"><rect x="368" y="140" width="517" height="510" rx="62" fill="#3c3628"/><rect x="372" y="144" width="506" height="498" rx="58" fill="#6b634a"/><path d="M385 200a50 50 0 0 1 50-52h390a50 50 0 0 1 45 30" fill="none" stroke="#fffff0" stroke-width="12" stroke-linecap="round"/><path d="M376 210v380" stroke="#d8d0b0" stroke-width="8"/><path d="M495.0 175L545 242.2H533.0V335H457.0V242.2H445Z" fill="#f0640c" stroke="#a83c00" stroke-width="6"/><path d="M630.0 190L680 257.2H668.0V350H592.0V257.2H580Z" fill="#f0c030" stroke="#b08810" stroke-width="6"/><path d="M762.5 340L810 272.8H798.6V180H726.4V272.8H715Z" fill="#f0640c" stroke="#a83c00" stroke-width="6"/><path d="M405 400.0L477.65999999999997 355V365.8H578V434.2H477.65999999999997V445Z" fill="#f0c030" stroke="#b08810" stroke-width="6"/><path d="M850 400.0L777.76 355V365.8H678V434.2H777.76V445Z" fill="#f0c030" stroke="#b08810" stroke-width="6"/><path d="M497.5 625L550 557.8H537.4V465H457.6V557.8H445Z" fill="#a8f020" stroke="#68a800" stroke-width="6"/><path d="M630.0 605L680 537.8H668.0V445H592.0V537.8H580Z" fill="#f0c030" stroke="#b08810" stroke-width="6"/><path d="M762.5 460L810 527.2H798.6V620H726.4V527.2H715Z" fill="#a8f020" stroke="#68a800" stroke-width="6"/><text x="495" y="300" font-family="DejaVu Sans,Liberation Sans,sans-serif" font-weight="bold" font-size="40" text-anchor="middle" fill="#fff">Z+</text><text x="630" y="315" font-family="DejaVu Sans,Liberation Sans,sans-serif" font-weight="bold" font-size="40" text-anchor="middle" fill="#222">Y+</text><text x="763" y="250" font-family="DejaVu Sans,Liberation Sans,sans-serif" font-weight="bold" font-size="40" text-anchor="middle" fill="#fff">Z-</text><text x="525" y="415" font-family="DejaVu Sans,Liberation Sans,sans-serif" font-weight="bold" font-size="40" text-anchor="middle" fill="#222">X-</text><text x="735" y="415" font-family="DejaVu Sans,Liberation Sans,sans-serif" font-weight="bold" font-size="40" text-anchor="middle" fill="#222">X+</text><text x="497" y="535" font-family="DejaVu Sans,Liberation Sans,sans-serif" font-weight="bold" font-size="40" text-anchor="middle" fill="#222">A+</text><text x="630" y="515" font-family="DejaVu Sans,Liberation Sans,sans-serif" font-weight="bold" font-size="40" text-anchor="middle" fill="#222">Y-</text><text x="763" y="565" font-family="DejaVu Sans,Liberation Sans,sans-serif" font-weight="bold" font-size="40" text-anchor="middle" fill="#222">A-</text></svg>
<div class="abs tb" style="left:1182px;top:383px;width:91px;height:54px"></div><svg class="abs" style="left:1178px;top:378px" width="100" height="60" viewBox="0 0 1278 767"><defs><linearGradient id="mg" x1="0" x2="1"><stop offset="0" stop-color="#fff"/><stop offset=".3" stop-color="#d8d8d8"/><stop offset="1" stop-color="#f4f4f4"/></linearGradient><linearGradient id="mgo" y1="0" y2="1" x1="0" x2="0"><stop offset="0" stop-color="#f8d878"/><stop offset="1" stop-color="#b87810"/></linearGradient></defs><rect x="410" y="130" width="400" height="470" fill="#000"/><rect x="435" y="155" width="355" height="432" fill="url(#mg)"/>
<rect x="625" y="170" width="282" height="332" fill="#000"/><rect x="642" y="188" width="246" height="310" fill="url(#mgo)"/><rect x="642" y="265" width="246" height="60" fill="#2860c8"/>
<path d="M690 237h65M780 237h40M838 237h28M690 370h65M775 370h40M835 370h35M715 405h45M785 405h35M690 442h65M775 442h40M840 442h25" stroke="#503000" stroke-width="13"/><path d="M690 297h60M770 297h50M838 297h30" stroke="#90b8f0" stroke-width="11"/>
<text x="628" y="680" text-anchor="middle" font-family="DejaVu Sans,Liberation Sans,sans-serif" font-weight="bold" font-size="285" fill="#10201c" opacity=".6" transform="translate(8 10)">MDI</text>
<text x="628" y="680" text-anchor="middle" font-family="DejaVu Sans,Liberation Sans,sans-serif" font-weight="bold" font-size="285" fill="#fff">MDI</text></svg>
<div class="abs yb" style="left:1182px;top:502px;width:91px;height:54px"></div><svg class="abs" style="left:1178px;top:498px" width="100" height="60" viewBox="0 0 1278 767"><path d="M335 130l200 0 15 145-195 55z" fill="#181818"/><path d="M345 140l45 0 10 150-40 12z" fill="#e8e8e8"/><path d="M395 150l130-8 12 125-130 30z" fill="#080010"/><path d="M430 215l20-25 15 15 20-20" stroke="#a020c0" stroke-width="10" fill="none"/>
<path d="M352 320l200-50 75 85-225 55z" fill="#a8a8a8" stroke="#666" stroke-width="6"/><path d="M385 330l150-38 45 50-165 40z" fill="#888"/>
<path d="M600 130h110v70h20l-48 72-48-72h22v-28h-56z" fill="#b80c0c" stroke="#800" stroke-width="5"/>
<path d="M370 490l48-50 48 50h-22v62h55v48h-105v-110z" fill="#10e010" stroke="#0a0" stroke-width="5"/>
<path d="M525 480l215-115 205 75v80l-195 170-225-120z" fill="#303030"/><path d="M560 485l190-100 140 52-175 130z" fill="#d8c8a0"/><path d="M620 470l120-62M660 490l125-68M700 515l110-75M640 440l100 60M690 415l100 55" stroke="#8a7a58" stroke-width="6"/>
<path d="M765 600l175-130v45l-175 135z" fill="#c8c8c8" stroke="#888" stroke-width="4"/><path d="M765 605l170-125" stroke="#f0e020" stroke-width="8"/>
<path d="M700 400l30-105 155 50 25 120-40 10-20-90-100-30-15 60z" fill="#383838"/><path d="M800 340l85 28v45l-85-28z" fill="#b8b8b8"/>
<rect x="740" y="265" width="55" height="110" rx="12" fill="#b0b0b0" stroke="#666" stroke-width="5"/><circle cx="768" cy="345" r="22" fill="#e8e0c8"/><rect x="752" y="215" width="40" height="55" rx="10" fill="#d01818"/>
<ellipse cx="922" cy="385" rx="22" ry="26" fill="#d01818"/><ellipse cx="605" cy="592" rx="24" ry="24" fill="#d01818"/><ellipse cx="592" cy="600" rx="10" ry="14" fill="#c8c8c8"/></svg>
<div class="abs tb2" style="left:1182px;top:621px;width:91px;height:54px"></div><svg class="abs" style="left:1178px;top:616px" width="100" height="60" viewBox="0 0 1278 767"><ellipse cx="640" cy="685" rx="270" ry="8" fill="#203430" opacity=".6"/>
<path d="M700 320L395 640" stroke="#1438a0" stroke-width="100" stroke-linecap="round"/><path d="M688 318L385 636" stroke="#2458d8" stroke-width="70" stroke-linecap="round"/><path d="M640 390L430 610" stroke="#123090" stroke-width="22" stroke-linecap="round"/><circle cx="400" cy="638" r="20" fill="#7aa8a0" stroke="#0c2878" stroke-width="8"/>
<path d="M665 300l40-110c20-40 70-65 135-60l-40 50 5 40 35 10 30-50c10 50-5 90-40 110l-20 15-75 55z" fill="#d8d8d8" stroke="#909090" stroke-width="6"/><path d="M720 250l60 10-20 40-50-10z" fill="#505050"/><path d="M700 200c20-35 60-55 110-55" stroke="#fff" stroke-width="14" fill="none"/>
<path d="M345 135l45 0 30 30L600 365l-22 22L385 190l-20-10z" fill="#e8e8e8" stroke="#989898" stroke-width="5"/>
<path d="M600 400L855 640" stroke="#901010" stroke-width="104" stroke-linecap="round"/><path d="M604 392L858 630" stroke="#d02020" stroke-width="80" stroke-linecap="round"/><path d="M650 400L870 606" stroke="#f08080" stroke-width="14" stroke-linecap="round"/>
<path d="M560 420l105-70 30 40-105 70z" fill="#c01818"/><path d="M600 455l85-58" stroke="#f8b0b0" stroke-width="8"/></svg>
<div class="abs yb" style="left:1182px;top:740px;width:91px;height:54px"></div><svg class="abs" style="left:1178px;top:736px" width="100" height="60" viewBox="0 0 1278 767"><defs><linearGradient id="ug" x1="0" x2="1"><stop offset="0" stop-color="#fff"/><stop offset=".45" stop-color="#fafafa"/><stop offset="1" stop-color="#d0d0d0"/></linearGradient></defs><path d="M385 250v-75a28 28 0 0 1 28-28h170a28 28 0 0 1 28 28v75h40v-75a28 28 0 0 1 28-28h165a28 28 0 0 1 28 28v70h32v195h-530v-190z" fill="url(#ug)" stroke="#70707c" stroke-width="14" stroke-linejoin="round"/><path d="M611 250h260" stroke="#70707c" stroke-width="14"/>
<path d="M612 150l25 28 25-28" stroke="#d02010" stroke-width="10" fill="none"/>
<path d="M478 650c0-80 60-110 120-120l10-45h60l10 45c60 10 120 40 120 120 0 20-60 32-160 32s-160-12-160-32z" fill="#f4f4f8"/><path d="M605 470h62l8 60-38 25-40-25z" fill="#e8c8b0"/>
<ellipse cx="636" cy="405" rx="72" ry="95" fill="#f8dcc8"/><path d="M562 400c-5-70 30-105 75-105s80 30 72 100c-10-40-25-55-72-55s-65 20-75 60z" fill="#b89878"/>
<path d="M835 575h25M845 620h15M840 680h25" stroke="#c8c040" stroke-width="6"/></svg>
<div class="abs c" style="left:1177px;width:100px;top:871px;font-size:13.33px;letter-spacing:-.3px">12:15:13</div>
<div class="abs c" style="left:1177px;width:100px;top:888px;font-size:13.33px;letter-spacing:-.3px">21.05.2015</div>
<!-- BOTTOM BAR -->
<div class="abs" style="left:0;top:970px;width:1278px;height:1px;background:#3c4e4a"></div><div class="abs" style="left:0;top:971px;width:1278px;height:2px;background:#e4e6e1"></div>
<div class="abs tb2" style="left:-1px;top:915px;width:91px;height:54px"></div>
<div class="abs tb2" style="left:130px;top:915px;width:91px;height:54px"></div>
<div class="abs tb2" style="left:261px;top:915px;width:91px;height:54px;background:linear-gradient(#9fae9f,#8a9a8e 50%,#7b8b82);border-color:#6d948c"><div class="abs" style="left:3px;top:3px;right:3px;bottom:3px;border:1px solid #e0806c;border-radius:2px"></div></div>
<div class="abs tb2" style="left:392px;top:915px;width:91px;height:54px"></div>
<div class="abs tb2" style="left:523px;top:915px;width:91px;height:54px"></div>
<div class="abs tb2" style="left:654px;top:915px;width:91px;height:54px"></div>
<div class="abs tb2" style="left:785px;top:915px;width:91px;height:54px"></div>
<div class="abs tb2" style="left:916px;top:915px;width:91px;height:54px"></div>
<div class="abs tb2" style="left:1047px;top:915px;width:91px;height:54px"></div>
<div class="abs tb2" style="left:1178px;top:915px;width:91px;height:54px"></div>
<svg class="abs" style="left:0px;top:908px" width="240" height="65" viewBox="0 0 1278 346"><path d="M195 145h32l8 12h38v55h-78z" fill="#b8b8a8" stroke="#6a6a5c" stroke-width="6"/><rect x="218" y="168" width="42" height="26" fill="#f4f4f0" stroke="#8a8a80" stroke-width="4"/><path d="M226 180h26" stroke="#aaa" stroke-width="4"/><path d="M193 215l6-20h76l-4 20z" fill="#c8c8b4" stroke="#6a6a5c" stroke-width="6" stroke-linejoin="round"/></svg><svg class="abs" style="left:0px;top:908px" width="240" height="65" viewBox="0 0 1278 346"><defs><linearGradient id="bl" x1="0" y1="0" x2="0" y2="1"><stop offset="0" stop-color="#e8f4ff"/><stop offset=".3" stop-color="#3898ff"/><stop offset=".7" stop-color="#3090ff"/><stop offset="1" stop-color="#d0e8ff"/></linearGradient><linearGradient id="pl" x1="0" y1="0" x2="1" y2="0"><stop offset="0" stop-color="#cfe6ff"/><stop offset=".25" stop-color="#4aa0ff"/><stop offset="1" stop-color="#2888ff"/></linearGradient><radialGradient id="rd" cx=".5" cy=".3" r=".8"><stop offset="0" stop-color="#e84040"/><stop offset="1" stop-color="#b80000"/></radialGradient></defs><path d="M826 66L1040 181 826 296z" fill="url(#pl)"/><path d="M826 296V66L1040 181" fill="none" stroke="#0030a0" stroke-width="10" stroke-linejoin="round"/><path d="M826 296L1040 181" stroke="#1060d0" stroke-width="6"/></svg><svg class="abs" style="left:120px;top:908px" width="240" height="65" viewBox="0 0 1278 346"><ellipse cx="990" cy="298" rx="95" ry="8" fill="#303830" opacity=".4"/><path d="M942 78h98l68 68v88l-68 68h-98l-68-68v-88z" fill="url(#rd)" stroke="#900000" stroke-width="5"/><path d="M945 88h92l62 62v30c-70-10-150-5-215 30v-60z" fill="#fff" opacity=".18"/><path d="M940 140l100 100M1040 140l-100 100" stroke="#fff" stroke-width="30"/></svg><svg class="abs" style="left:380px;top:908px" width="240" height="65" viewBox="0 0 1278 346"><rect x="192" y="62" width="80" height="236" fill="url(#bl)"/><rect x="337" y="62" width="80" height="236" fill="url(#bl)"/><path d="M196 62v236M268 62v236M341 62v236M413 62v236" stroke="#0030a0" stroke-width="9"/></svg><svg class="abs" style="left:380px;top:908px" width="240" height="65" viewBox="0 0 1278 346"><path d="M935 118h-50v47h50M935 181h-50v50h50" fill="none" stroke="#000" stroke-width="8"/><text x="937" y="127" font-family="Liberation Mono,DejaVu Sans Mono,monospace" font-weight="bold" font-size="50.500" xml:space="preserve" fill="#222">G0 X10</text><text x="937" y="192" font-family="Liberation Mono,DejaVu Sans Mono,monospace" font-weight="bold" font-size="50.500" xml:space="preserve" fill="#222">G1 Y20</text><text x="937" y="255" font-family="Liberation Mono,DejaVu Sans Mono,monospace" font-weight="bold" font-size="50.500" xml:space="preserve" fill="#222">G1 Z30</text></svg><svg class="abs" style="left:640px;top:908px" width="240" height="65" viewBox="0 0 1278 346"><path d="M245 175h-27v85" fill="none" stroke="#4a6f68" stroke-width="8"/><path d="M200 255h36l-18 22z" fill="#4a6f68"/><text x="250" y="127" font-family="Liberation Mono,DejaVu Sans Mono,monospace" font-weight="bold" font-size="50.500" xml:space="preserve" fill="#5b827a">G0 X10</text><text x="250" y="192" font-family="Liberation Mono,DejaVu Sans Mono,monospace" font-weight="bold" font-size="50.500" xml:space="preserve" fill="#5b827a">G1 Y20</text><text x="250" y="255" font-family="Liberation Mono,DejaVu Sans Mono,monospace" font-weight="bold" font-size="50.500" xml:space="preserve" fill="#5b827a">G1 Z30</text></svg><svg class="abs" style="left:640px;top:908px" width="240" height="65" viewBox="0 0 1278 346"><path d="M1020 126h-48v92h40" fill="none" stroke="#ff0000" stroke-width="8"/><path d="M1005 203l20 15-20 15z" fill="#ff0000"/><path d="M1035 210l20-70" stroke="#000" stroke-width="10"/></svg><svg class="abs" style="left:1038px;top:908px" width="240" height="65" viewBox="0 0 1278 346"><rect x="181" y="102" width="216" height="168" rx="8" fill="#f2f2f6" stroke="#b0b0b8" stroke-width="7"/><path d="M185 110h208" stroke="#c8c8d0" stroke-width="12"/><g fill="#48a818" stroke="#2c7808" stroke-width="3"><path d="M196 130l44 8-12 12 18 18-14 14-18-18-12 12z"/><path d="M382 130l-44 8 12 12-18 18 14 14 18-18 12 12z"/><path d="M196 256l44-8-12-12 18-18-14-14-18 18-12-12z"/><path d="M382 256l-44-8 12-12-18-18 14-14 18 18 12-12z"/></g></svg><svg class="abs" style="left:1038px;top:908px" width="240" height="65" viewBox="0 0 1278 346"><path d="M880 284h195" stroke="#e08820" stroke-width="8"/><path d="M895 110h165l12 168h-190z" fill="#f8f8f6" stroke="#c0c0bc" stroke-width="4"/><path d="M884 262h188v16h-188z" fill="#e4e4e0"/><path d="M908 145h50M968 145h30M1010 145h20M908 160h20M935 160h30M905 178h40M955 178h25M990 178h30M905 200h30M945 200h25M900 228h40M950 228h20M900 243h35M945 243h30" stroke="#aaa" stroke-width="5"/><g fill="none" stroke="#fff" stroke-width="7"><path d="M912 125v-22M933 125v-22M954 125v-22M975 125v-22M996 125v-22M1017 125v-22M1038 125v-22"/></g><g fill="none" stroke="#888" stroke-width="2.500"><ellipse cx="912" cy="112" rx="5" ry="13"/><ellipse cx="933" cy="112" rx="5" ry="13"/><ellipse cx="954" cy="112" rx="5" ry="13"/><ellipse cx="975" cy="112" rx="5" ry="13"/><ellipse cx="996" cy="112" rx="5" ry="13"/><ellipse cx="1017" cy="112" rx="5" ry="13"/><ellipse cx="1038" cy="112" rx="5" ry="13"/></g><path d="M985 240l10-32 85-85 22 22-85 85z" fill="#f09020" stroke="#c06808" stroke-width="4" stroke-linejoin="round"/><path d="M1000 212l82-82" stroke="#ffc870" stroke-width="8"/><path d="M985 240l10-32 22 22z" fill="#f4e0c0"/><path d="M985 240l4-12 8 8z" fill="#222"/></svg><div class="abs c" style="left:916px;width:91px;top:935px;font-size:13.33px">M1</div>
<!-- PREVIEW -->
<div class="abs" style="left:2px;top:31px;width:441px;height:629px;border:1px solid #b9bcb5;border-radius:3px;background:#f1f2ef"></div>
<div class="abs" style="left:4px;top:33px;width:436px;height:625px;background:#000;overflow:hidden;box-shadow:1px 1px 0 #a8aba4"></div>
<svg class="abs" style="left:4px;top:33px" width="436" height="625" viewBox="4 33 436 625" fill="none"><path d="M4.0 189.0L171.0 189.0" stroke="#5e9a9c" stroke-width="1" stroke-dasharray="2 2" opacity="0.9"/><path d="M171.0 189.0L171.0 212.0" stroke="#5e9a9c" stroke-width="1" stroke-dasharray="2 2" opacity="0.9"/><path d="M193.0 261.0L440.0 261.0" stroke="#5e9a9c" stroke-width="1" stroke-dasharray="2 2" opacity="0.9"/><path d="M62.5 192.0L62.5 252.0" stroke="#5e9a9c" stroke-width="1" stroke-dasharray="2 2" opacity="0.9"/><path d="M111.0 226.0L111.0 292.0" stroke="#5e9a9c" stroke-width="1" stroke-dasharray="2 2" opacity="0.9"/><path d="M352.5 258.0L352.5 326.0" stroke="#5e9a9c" stroke-width="1" stroke-dasharray="2 2" opacity="0.9"/><path d="M270.0 258.0L270.0 286.0" stroke="#5e9a9c" stroke-width="1" stroke-dasharray="2 2" opacity="0.9"/><path d="M398.0 262.0L398.0 330.0" stroke="#5e9a9c" stroke-width="1" stroke-dasharray="2 2" opacity="0.9"/><path d="M62.0 232.0L192.0 262.0" stroke="#5e9a9c" stroke-width="1" stroke-dasharray="2 2" opacity="0.9"/><path d="M111.0 236.0L192.0 262.0" stroke="#5e9a9c" stroke-width="1" stroke-dasharray="2 2" opacity="0.9"/><path d="M124.0 254.0L235.0 300.0" stroke="#5e9a9c" stroke-width="1" stroke-dasharray="2 2" opacity="0.9"/><path d="M20.0 200.0L124.0 236.0" stroke="#5e9a9c" stroke-width="1" stroke-dasharray="2 2" opacity="0.9"/><path d="M4.0 215.0L62.0 232.0" stroke="#5e9a9c" stroke-width="1" stroke-dasharray="2 2" opacity="0.9"/><path d="M270.0 300.0L352.0 318.0" stroke="#5e9a9c" stroke-width="1" stroke-dasharray="2 2" opacity="0.9"/><path d="M193.0 262.0L244.0 322.0" stroke="#5e9a9c" stroke-width="1" stroke-dasharray="2 2" opacity="0.9"/><path d="M244.0 322.0L335.0 350.0" stroke="#5e9a9c" stroke-width="1" stroke-dasharray="2 2" opacity="0.9"/><path d="M352.0 318.0L436.0 300.0" stroke="#5e9a9c" stroke-width="1" stroke-dasharray="2 2" opacity="0.9"/><path d="M244.0 322.0L160.0 300.0" stroke="#5e9a9c" stroke-width="1" stroke-dasharray="2 2" opacity="0.9"/><path d="M111.0 290.0L40.0 262.0" stroke="#5e9a9c" stroke-width="1" stroke-dasharray="2 2" opacity="0.9"/><path d="M300.0 270.0L436.0 322.0" stroke="#5e9a9c" stroke-width="1" stroke-dasharray="2 2" opacity="0.9"/><path d="M160.0 300.0L244.3 400.0" stroke="#5e9a9c" stroke-width="1" stroke-dasharray="2 2" opacity="0.9"/><path d="M244.3 323.0L244.3 400.0" stroke="#a8c8c8" stroke-width="1"/><ellipse cx="52.6" cy="255.0" rx="140.0" ry="65.0" fill="none" stroke="#fff" stroke-width="1"/><ellipse cx="52.6" cy="259.1" rx="140.2" ry="65.3" fill="none" stroke="#fff" stroke-width="1"/><ellipse cx="52.6" cy="263.2" rx="140.4" ry="65.6" fill="none" stroke="#fff" stroke-width="1"/><ellipse cx="52.6" cy="267.3" rx="140.6" ry="65.9" fill="none" stroke="#fff" stroke-width="1"/><ellipse cx="52.6" cy="271.4" rx="140.8" ry="66.2" fill="none" stroke="#fff" stroke-width="1"/><ellipse cx="52.6" cy="275.5" rx="141.0" ry="66.5" fill="none" stroke="#fff" stroke-width="1"/><ellipse cx="52.6" cy="279.6" rx="141.2" ry="66.8" fill="none" stroke="#fff" stroke-width="1"/><ellipse cx="52.6" cy="283.7" rx="141.4" ry="67.1" fill="none" stroke="#fff" stroke-width="1"/><ellipse cx="52.6" cy="287.8" rx="141.6" ry="67.4" fill="none" stroke="#fff" stroke-width="1"/><ellipse cx="52.6" cy="291.9" rx="141.8" ry="67.7" fill="none" stroke="#fff" stroke-width="1"/><ellipse cx="52.6" cy="296.0" rx="142.0" ry="68.0" fill="none" stroke="#fff" stroke-width="1"/><ellipse cx="52.6" cy="257.0" rx="132.0" ry="60.5" fill="none" stroke="#fff" stroke-width="1" opacity="0.9"/><ellipse cx="52.6" cy="261.4" rx="132.0" ry="60.8" fill="none" stroke="#fff" stroke-width="1" opacity="0.9"/><ellipse cx="52.6" cy="265.8" rx="132.0" ry="61.1" fill="none" stroke="#fff" stroke-width="1" opacity="0.9"/><ellipse cx="52.6" cy="270.2" rx="132.0" ry="61.4" fill="none" stroke="#fff" stroke-width="1" opacity="0.9"/><ellipse cx="52.6" cy="274.6" rx="132.0" ry="61.7" fill="none" stroke="#fff" stroke-width="1" opacity="0.9"/><ellipse cx="52.6" cy="279.0" rx="132.0" ry="62.0" fill="none" stroke="#fff" stroke-width="1" opacity="0.9"/><ellipse cx="52.6" cy="283.4" rx="132.0" ry="62.3" fill="none" stroke="#fff" stroke-width="1" opacity="0.9"/><path d="M-85.400 249A138 64 0 0 0 186 268" fill="none" stroke="#fff" stroke-width="2.600" opacity=".92"/><ellipse cx="52.6" cy="255.0" rx="140.5" ry="65.3" fill="none" stroke="#c4595c" stroke-width="2.2"/><ellipse cx="52.6" cy="258.2" rx="139.0" ry="64.7" fill="none" stroke="#c4595c" stroke-width="1.6" opacity="0.9"/><ellipse cx="52.6" cy="261.4" rx="137.5" ry="64.1" fill="none" stroke="#c4595c" stroke-width="1.4" opacity="0.85"/><path d="M171.5 195.0L171.5 213.0" stroke="#b03a3c" stroke-width="2"/><ellipse cx="31.0" cy="228.6" rx="55.0" ry="19.0" fill="none" stroke="#fff" stroke-width="1"/><ellipse cx="31.0" cy="237.0" rx="55.0" ry="19.0" fill="none" stroke="#fff" stroke-width="1"/><ellipse cx="31.0" cy="246.0" rx="55.0" ry="19.0" fill="none" stroke="#fff" stroke-width="1"/><ellipse cx="31.0" cy="256.0" rx="35.0" ry="13.0" fill="none" stroke="#fff" stroke-width="1"/><ellipse cx="31.0" cy="265.6" rx="35.0" ry="13.0" fill="none" stroke="#fff" stroke-width="1"/><ellipse cx="31.0" cy="275.4" rx="35.0" ry="13.0" fill="none" stroke="#fff" stroke-width="1"/><ellipse cx="31.0" cy="283.0" rx="35.0" ry="13.0" fill="none" stroke="#fff" stroke-width="1"/><path d="M66.0 246.0L66.0 262.0" stroke="#fff" stroke-width="1"/><path d="M71.0 240.0L71.0 256.0" stroke="#fff" stroke-width="1"/><ellipse cx="123.4" cy="226.0" rx="14.2" ry="4.2" fill="none" stroke="#fff" stroke-width="0.8"/><ellipse cx="123.4" cy="229.0" rx="14.2" ry="4.2" fill="none" stroke="#fff" stroke-width="0.8"/><ellipse cx="123.4" cy="232.0" rx="14.2" ry="4.2" fill="none" stroke="#fff" stroke-width="0.8"/><ellipse cx="123.4" cy="235.0" rx="14.2" ry="4.2" fill="none" stroke="#fff" stroke-width="0.8"/><path d="M108.4 238.0C108.4 229.8 138.4 229.8 138.4 238.0L138.4 241.0L123.4 254.0L108.4 241.0Z" fill="#fff"/><path d="M123.4 217.0L123.4 238.0" stroke="#fff" stroke-width="1"/><path d="M124.8 254.0L124.8 276.0" stroke="#fff" stroke-width="1"/><path d="M111.5 240.0L111.5 290.0" stroke="#9fc4c4" stroke-width="1"/><ellipse cx="335.0" cy="333.5" rx="188.0" ry="77.5" fill="none" stroke="#fff" stroke-width="1.2"/><ellipse cx="335.0" cy="338.2" rx="188.2" ry="78.8" fill="none" stroke="#fff" stroke-width="1.2"/><ellipse cx="335.0" cy="342.9" rx="188.3" ry="80.1" fill="none" stroke="#fff" stroke-width="1.2"/><ellipse cx="335.0" cy="347.6" rx="188.4" ry="81.4" fill="none" stroke="#fff" stroke-width="1.2"/><ellipse cx="335.0" cy="352.3" rx="188.6" ry="82.7" fill="none" stroke="#fff" stroke-width="1.2"/><ellipse cx="335.0" cy="357.0" rx="188.8" ry="84.0" fill="none" stroke="#fff" stroke-width="1.2"/><ellipse cx="335.0" cy="361.7" rx="188.9" ry="85.3" fill="none" stroke="#fff" stroke-width="1.2"/><ellipse cx="335.0" cy="366.4" rx="189.1" ry="86.6" fill="none" stroke="#fff" stroke-width="1.2"/><ellipse cx="335.0" cy="371.1" rx="189.2" ry="87.9" fill="none" stroke="#fff" stroke-width="1.2"/><ellipse cx="335.0" cy="375.8" rx="189.3" ry="89.2" fill="none" stroke="#fff" stroke-width="1.2"/><ellipse cx="335.0" cy="380.5" rx="189.5" ry="90.5" fill="none" stroke="#fff" stroke-width="1.2"/><ellipse cx="335.0" cy="338.0" rx="176.0" ry="73.0" fill="none" stroke="#fff" stroke-width="1" opacity="0.85"/><ellipse cx="335.0" cy="343.5" rx="176.2" ry="74.4" fill="none" stroke="#fff" stroke-width="1" opacity="0.85"/><ellipse cx="335.0" cy="349.0" rx="176.3" ry="75.8" fill="none" stroke="#fff" stroke-width="1" opacity="0.85"/><ellipse cx="335.0" cy="354.5" rx="176.4" ry="77.2" fill="none" stroke="#fff" stroke-width="1" opacity="0.85"/><ellipse cx="335.0" cy="333.5" rx="188.0" ry="77.5" fill="none" stroke="#fff" stroke-width="2.6"/><ellipse cx="335.0" cy="335.3" rx="186.0" ry="77.0" fill="none" stroke="#fff" stroke-width="2.4"/><ellipse cx="335.0" cy="337.0" rx="183.0" ry="76.0" fill="none" stroke="#fff" stroke-width="1.8"/><path d="M352.5 258.0L352.5 326.0" stroke="#6aa4a6" stroke-width="1.2"/><path d="M270.0 258.0L270.0 270.0" stroke="#6aa4a6" stroke-width="1"/><ellipse cx="335.4" cy="325.5" rx="62.5" ry="25.0" fill="none" stroke="#fff" stroke-width="1"/><ellipse cx="335.4" cy="332.0" rx="62.5" ry="25.0" fill="none" stroke="#fff" stroke-width="1"/><ellipse cx="335.4" cy="339.0" rx="62.5" ry="25.0" fill="none" stroke="#fff" stroke-width="1"/><ellipse cx="335.0" cy="320.0" rx="37.0" ry="15.0" fill="none" stroke="#fff" stroke-width="1"/><ellipse cx="335.0" cy="331.0" rx="37.0" ry="15.0" fill="none" stroke="#fff" stroke-width="1"/><ellipse cx="335.0" cy="341.6" rx="37.0" ry="15.0" fill="none" stroke="#fff" stroke-width="1"/><ellipse cx="335.0" cy="352.0" rx="37.0" ry="15.0" fill="none" stroke="#fff" stroke-width="1"/><ellipse cx="335.0" cy="363.0" rx="37.0" ry="15.0" fill="none" stroke="#fff" stroke-width="1"/><ellipse cx="335.0" cy="373.7" rx="37.0" ry="15.0" fill="none" stroke="#fff" stroke-width="1"/><path d="M372.0 341.0L372.0 374.0" stroke="#fff" stroke-width="1"/><path d="M298.0 341.0L298.0 374.0" stroke="#fff" stroke-width="1" opacity="0.6"/><ellipse cx="271.0" cy="269.0" rx="14.7" ry="4.3" fill="none" stroke="#fff" stroke-width="0.8"/><ellipse cx="271.0" cy="273.2" rx="14.7" ry="4.3" fill="none" stroke="#fff" stroke-width="0.8"/><ellipse cx="271.0" cy="277.5" rx="14.7" ry="4.3" fill="none" stroke="#fff" stroke-width="0.8"/><ellipse cx="271.0" cy="281.8" rx="14.7" ry="4.3" fill="none" stroke="#fff" stroke-width="0.8"/><path d="M255.5 286.0C255.5 277.5 286.5 277.5 286.5 286.0L286.5 289.0L271.0 304.0L255.5 289.0Z" fill="#fff"/><path d="M271.0 262.0L271.0 286.0" stroke="#fff" stroke-width="1"/><path d="M271.0 304.0L271.0 329.0" stroke="#fff" stroke-width="1"/><ellipse cx="437.0" cy="302.0" rx="14.2" ry="4.2" fill="none" stroke="#fff" stroke-width="0.8"/><ellipse cx="437.0" cy="306.0" rx="14.2" ry="4.2" fill="none" stroke="#fff" stroke-width="0.8"/><ellipse cx="437.0" cy="310.0" rx="14.2" ry="4.2" fill="none" stroke="#fff" stroke-width="0.8"/><ellipse cx="437.0" cy="314.0" rx="14.2" ry="4.2" fill="none" stroke="#fff" stroke-width="0.8"/><path d="M422.0 318.0C422.0 309.8 452.0 309.8 452.0 318.0L452.0 321.0L437.0 336.0L422.0 321.0Z" fill="#fff"/><path d="M431.0 336.0L431.0 362.0" stroke="#fff" stroke-width="1"/><path d="M192.0 260.0L276.3 364.3" stroke="#b4383a" stroke-width="1.6"/><defs><linearGradient id="tg" x1="0" x2="1"><stop offset="0" stop-color="#8a8a8a"/><stop offset=".25" stop-color="#a2a2a2"/><stop offset=".6" stop-color="#7c7c7c"/><stop offset="1" stop-color="#5a5a5a"/></linearGradient></defs><path d="M276.300 334.500C276.300 326.500 317.800 326.500 317.800 334.500L317.800 481C317.800 490 276.300 490 276.300 481Z" fill="url(#tg)" opacity=".8"/><ellipse cx="297" cy="334.500" rx="20.700" ry="6" fill="#8e8e8e" opacity=".55"/><path d="M276.300 358C276.300 352 312 352 312 358L312 374L294 392L276.300 374Z" fill="#c8c8c8" opacity=".42"/><ellipse cx="294.0" cy="352.0" rx="17.5" ry="5.5" fill="none" stroke="#d8d8d8" stroke-width="0.8" opacity="0.5"/><ellipse cx="294.0" cy="358.0" rx="17.5" ry="5.5" fill="none" stroke="#d8d8d8" stroke-width="0.8" opacity="0.5"/><ellipse cx="294.0" cy="364.0" rx="17.5" ry="5.5" fill="none" stroke="#d8d8d8" stroke-width="0.8" opacity="0.5"/><ellipse cx="294.0" cy="370.0" rx="17.5" ry="5.5" fill="none" stroke="#d8d8d8" stroke-width="0.8" opacity="0.5"/><path d="M294.500 393.500L293 478" stroke="#b4b478" stroke-width="1.600"/><path d="M4.0 538.0L268.0 657.5" stroke="#ff5a64" stroke-width="1"/><path d="M318.0 657.5L340.0 632.0" stroke="#ff5a64" stroke-width="1"/><g transform="translate(18.5 57.5)"><circle r="4.500" fill="#000" stroke="#fff" stroke-width="1"/><path d="M0 0V-4.500A4.500 4.500 0 0 1 4.500 0ZM0 0V4.500A4.500 4.500 0 0 1-4.500 0Z" fill="#fff"/><path d="M-6.500 0H6.500M0-7V8" stroke="#fff" stroke-width="1"/></g><text x="183" y="126.500" font-family="DejaVu Sans,Liberation Sans,sans-serif" font-size="35" fill="#00ff00" stroke="#00ff00" stroke-width="1.800" stroke-linejoin="round" textLength="100" lengthAdjust="spacingAndGlyphs">СТОП</text><path d="M209.400 131C195 150 172 175 155.500 197" fill="none" stroke="#00ff00" stroke-width="6" stroke-linecap="round"/><path d="M151 186L154.700 199.500L169 192.500" fill="none" stroke="#00ff00" stroke-width="6.500" stroke-linecap="round" stroke-linejoin="round"/><text transform="translate(318 199) scale(.95 1)" font-family="DejaVu Sans,Liberation Sans,sans-serif" font-size="60" fill="#ff0000" stroke="#ff0000" stroke-width="1.200" stroke-linejoin="round">?</text><path d="M323.600 188.500C305 215 278 245 262 268C252 282 244 295 237.500 305" fill="none" stroke="#ff0000" stroke-width="6.600" stroke-linecap="round"/><path d="M236 290L236.500 306.500L255.500 298.500" fill="none" stroke="#ff0000" stroke-width="7" stroke-linecap="round" stroke-linejoin="round"/><path d="M284.500 479.500v16.500l3.800-3.600 2.800 6.200 2.400-1.100-2.800-6.100h5.300z" fill="#fff" stroke="#000" stroke-width="1" stroke-linejoin="round"/></svg>
<!-- /PREVIEW -->
<!-- TITLE ICONS -->
<svg class="abs" style="left:0;top:2px" width="24" height="22" viewBox="0 2 24 22"><circle cx="10" cy="12.700" r="7.300" fill="#ffe400" stroke="#f04a10" stroke-width="1.200"/><text x="5.200" y="13.200" font-family="Liberation Sans,DejaVu Sans,sans-serif" font-weight="bold" font-size="7.500" fill="#e82010">N</text><text x="9.500" y="18" font-family="Liberation Sans,DejaVu Sans,sans-serif" font-weight="bold" font-size="7.500" fill="#e82010">S</text></svg>
<div class="abs wb" style="left:1213px;top:4px"></div><div class="abs wb" style="left:1235px;top:4px"></div><div class="abs wb" style="left:1257px;top:4px"></div>
<svg class="abs" style="left:1213px;top:4px" width="62" height="18" viewBox="1213 4 62 18"><rect x="1217.500" y="14.500" width="9" height="2.800" fill="#fff"/><rect x="1241" y="10.500" width="6" height="5" fill="none" stroke="#fff" stroke-width="1.300"/><rect x="1240.400" y="9.300" width="7.200" height="2" fill="#fff"/><path d="M1262 9l8 8M1270 9l-8 8" stroke="#fff" stroke-width="2.400"/></svg>
<!--SECTIONS-->
</body>
</html>
